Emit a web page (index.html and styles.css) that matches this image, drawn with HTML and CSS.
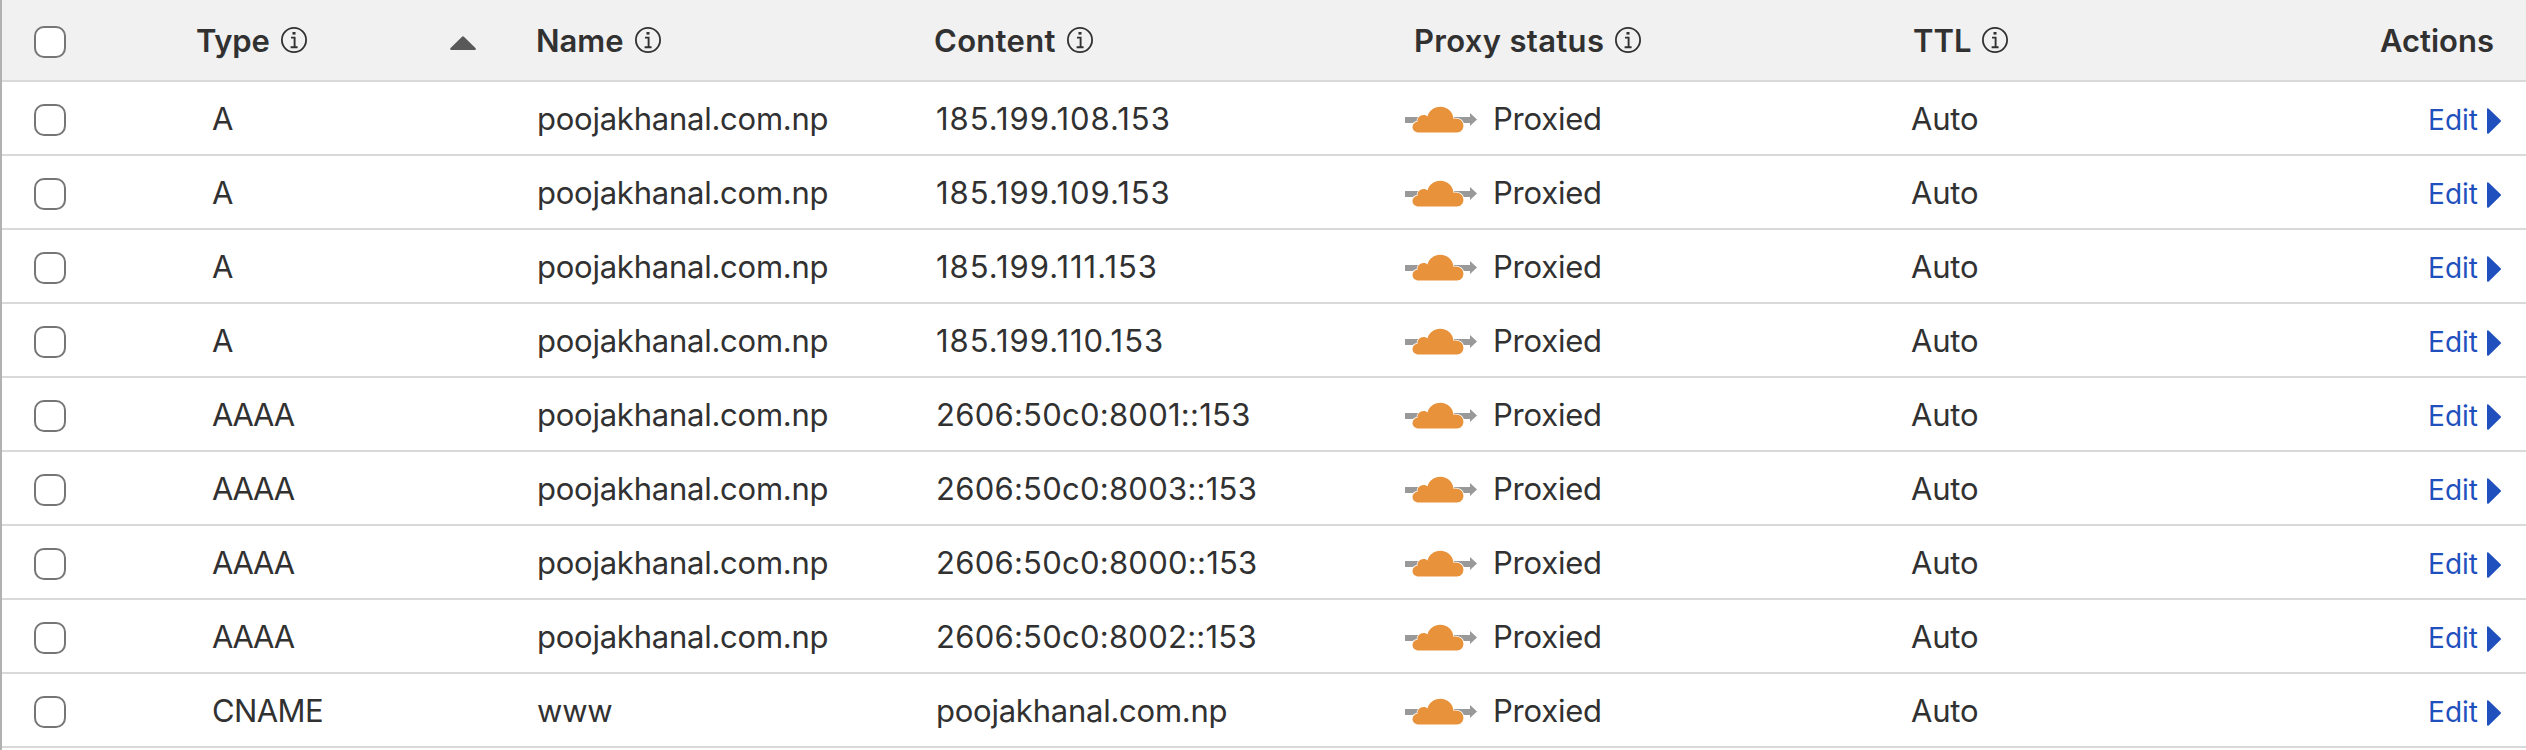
FILE: index.html
```
<!DOCTYPE html>
<html lang="en">
<head>
<meta charset="utf-8">
<title>DNS records</title>
<link rel="stylesheet" href="styles.css">
</head>
<body>
<svg class="defs" width="0" height="0">
  <symbol id="info" viewBox="0 0 26 26">
    <circle cx="13" cy="13" r="12.1" fill="none" stroke="currentColor" stroke-width="1.8"/>
    <rect x="11.5" y="5" width="3" height="2.6" fill="currentColor"/>
    <path d="M10 10.6h3.6v9.6M9.6 20.3h7" fill="none" stroke="currentColor" stroke-width="1.9"/>
  </symbol>
  <symbol id="cloud" viewBox="0 0 72 28">
    <path d="M0 11h48v6H0z" fill="#999"/>
    <path d="M45 11h20V7l7 6.5-7 6.5v-3H45z" fill="#999"/>
    <path d="M14 26.5c-4 0-6.5-2.500-6.500-5.500 0-3 2-5 5-5.300C12 12 15 9 18.500 9c1.500 0 2.800.5 4 1.400C24 4.600 29.200.8 35.200.8 42.500.8 48.200 6 48.400 12.800c5.600-1.200 10 2 10 7 0 4-2.800 6.700-6.400 6.700z" fill="#e8923c" stroke="#fff" stroke-width="1.600" paint-order="stroke"/>
  </symbol>
  <symbol id="play" viewBox="0 0 14 26">
    <path d="M0 1.500C0 0 1 0 2 .9l11.400 11.200c.8.800.8 1.200 0 2L2 25.300c-1 .9-2 .7-2-.8z" fill="currentColor"/>
  </symbol>
</svg>
<main class="table" id="table">
  <div class="row head">
    <div class="cell check"><input class="box" type="checkbox"></div>
    <div class="cell type"><span class="h-type">Type</span><svg class="info"><use href="#info"/></svg><svg class="sort" viewBox="0 0 26 14"><path d="M1.200 14C0 14-.3 13 .6 12L11.800.9c.9-.9 1.500-.9 2.400 0L25.400 12c.9 1 .6 2-.6 2z" fill="#595959"/></svg></div>
    <div class="cell name"><span>Name</span><svg class="info"><use href="#info"/></svg></div>
    <div class="cell content"><span class="h-content">Content</span><svg class="info"><use href="#info"/></svg></div>
    <div class="cell proxy"><span class="h-proxy">Proxy status</span><svg class="info"><use href="#info"/></svg></div>
    <div class="cell ttl"><span>TTL</span><svg class="info"><use href="#info"/></svg></div>
    <div class="cell actions"><span>Actions</span></div>
  </div>
</main>
<script src="table.js"></script>
</body>
</html>
```
FILE: styles.css
```
* { box-sizing: border-box; }
body {
  margin: 0;
  background: #fff;
  color: #313131;
  font: 400 31px/38px Inter, "Liberation Sans", sans-serif;
  overflow: hidden;
}
.defs { position: absolute; }
.table { height: 750px; border-left: 2px solid #b1b1b1; overflow: hidden; }
.row {
  display: grid;
  grid-template-columns: 193px 341px 398px 469px 507px 1fr 200px;
  height: 74px;
  border-bottom: 2px solid #d9d9d9;
}
.row { grid-template-columns: 193px 341px 398px 469px 508px 300px 1fr; }
.head { height: 82px; background: #f1f1f1; font-weight: 600; }
.cell { display: flex; align-items: center; padding-top: 1px; white-space: nowrap; }
.check { padding: 4px 0 0 32px; }
.box {
  appearance: none;
  width: 32px;
  height: 32px;
  margin: 0;
  border: 2px solid #767676;
  border-radius: 10px;
  background: #fff;
}
.type { padding-left: 17px; }
.name { padding-left: 1px; }
.content { padding-left: 2px; }
.proxy { padding-left: 2px; }
.actions { justify-content: flex-end; padding-right: 25px; }
.info { width: 26px; height: 26px; margin: 0 0 2px 11px; }
.sort { width: 26px; height: 14px; margin: 4px 60px 0 auto; }
.head .type { padding-left: 1px; }
.head .name, .head .content { padding-left: 0; }
.head .proxy { padding-left: 11px; }
.head .ttl { padding-left: 2px; }
.head .actions { padding-right: 32px; }
.h-type { letter-spacing: -.2px; }
.h-content { letter-spacing: .3px; }
.h-proxy { letter-spacing: .32px; }
.aaaa { letter-spacing: -1.3px; }
.cname { letter-spacing: -.6px; }
.domain { letter-spacing: -.24px; }
.ipv4 { letter-spacing: .98px; }
.ipv6 { letter-spacing: .25px; }
.cloud { width: 72px; height: 28px; margin: 3px 16px 0 0; }
.status, .auto { letter-spacing: -.22px; }
.edit {
  display: flex;
  align-items: center;
  gap: 9px;
  padding-top: 3px;
  color: #1f50bd;
  font-size: 28px;
  text-decoration: none;
}
.play { width: 14px; height: 26px; margin-top: 2px; }
```
FILE: table.js
```
const domain = 'poojakhanal.com.np';
const records = [
  ['A', domain, '185.199.108.153', 'ipv4'],
  ['A', domain, '185.199.109.153', 'ipv4'],
  ['A', domain, '185.199.111.153', 'ipv4'],
  ['A', domain, '185.199.110.153', 'ipv4'],
  ['AAAA', domain, '2606:50c0:8001::153', 'ipv6'],
  ['AAAA', domain, '2606:50c0:8003::153', 'ipv6'],
  ['AAAA', domain, '2606:50c0:8000::153', 'ipv6'],
  ['AAAA', domain, '2606:50c0:8002::153', 'ipv6'],
  ['CNAME', 'www', domain, 'domain'],
];
document.getElementById('table').insertAdjacentHTML('beforeend', records.map(([type, name, content, kind]) => `
  <div class="row">
    <div class="cell check"><input class="box" type="checkbox"></div>
    <div class="cell type"><span class="${type.toLowerCase()}">${type}</span></div>
    <div class="cell name"><span class="domain">${name}</span></div>
    <div class="cell content"><span class="${kind}">${content}</span></div>
    <div class="cell proxy"><svg class="cloud"><use href="#cloud"/></svg><span class="status">Proxied</span></div>
    <div class="cell ttl"><span class="auto">Auto</span></div>
    <div class="cell actions"><a class="edit">Edit<svg class="play"><use href="#play"/></svg></a></div>
  </div>`).join(''));
```
